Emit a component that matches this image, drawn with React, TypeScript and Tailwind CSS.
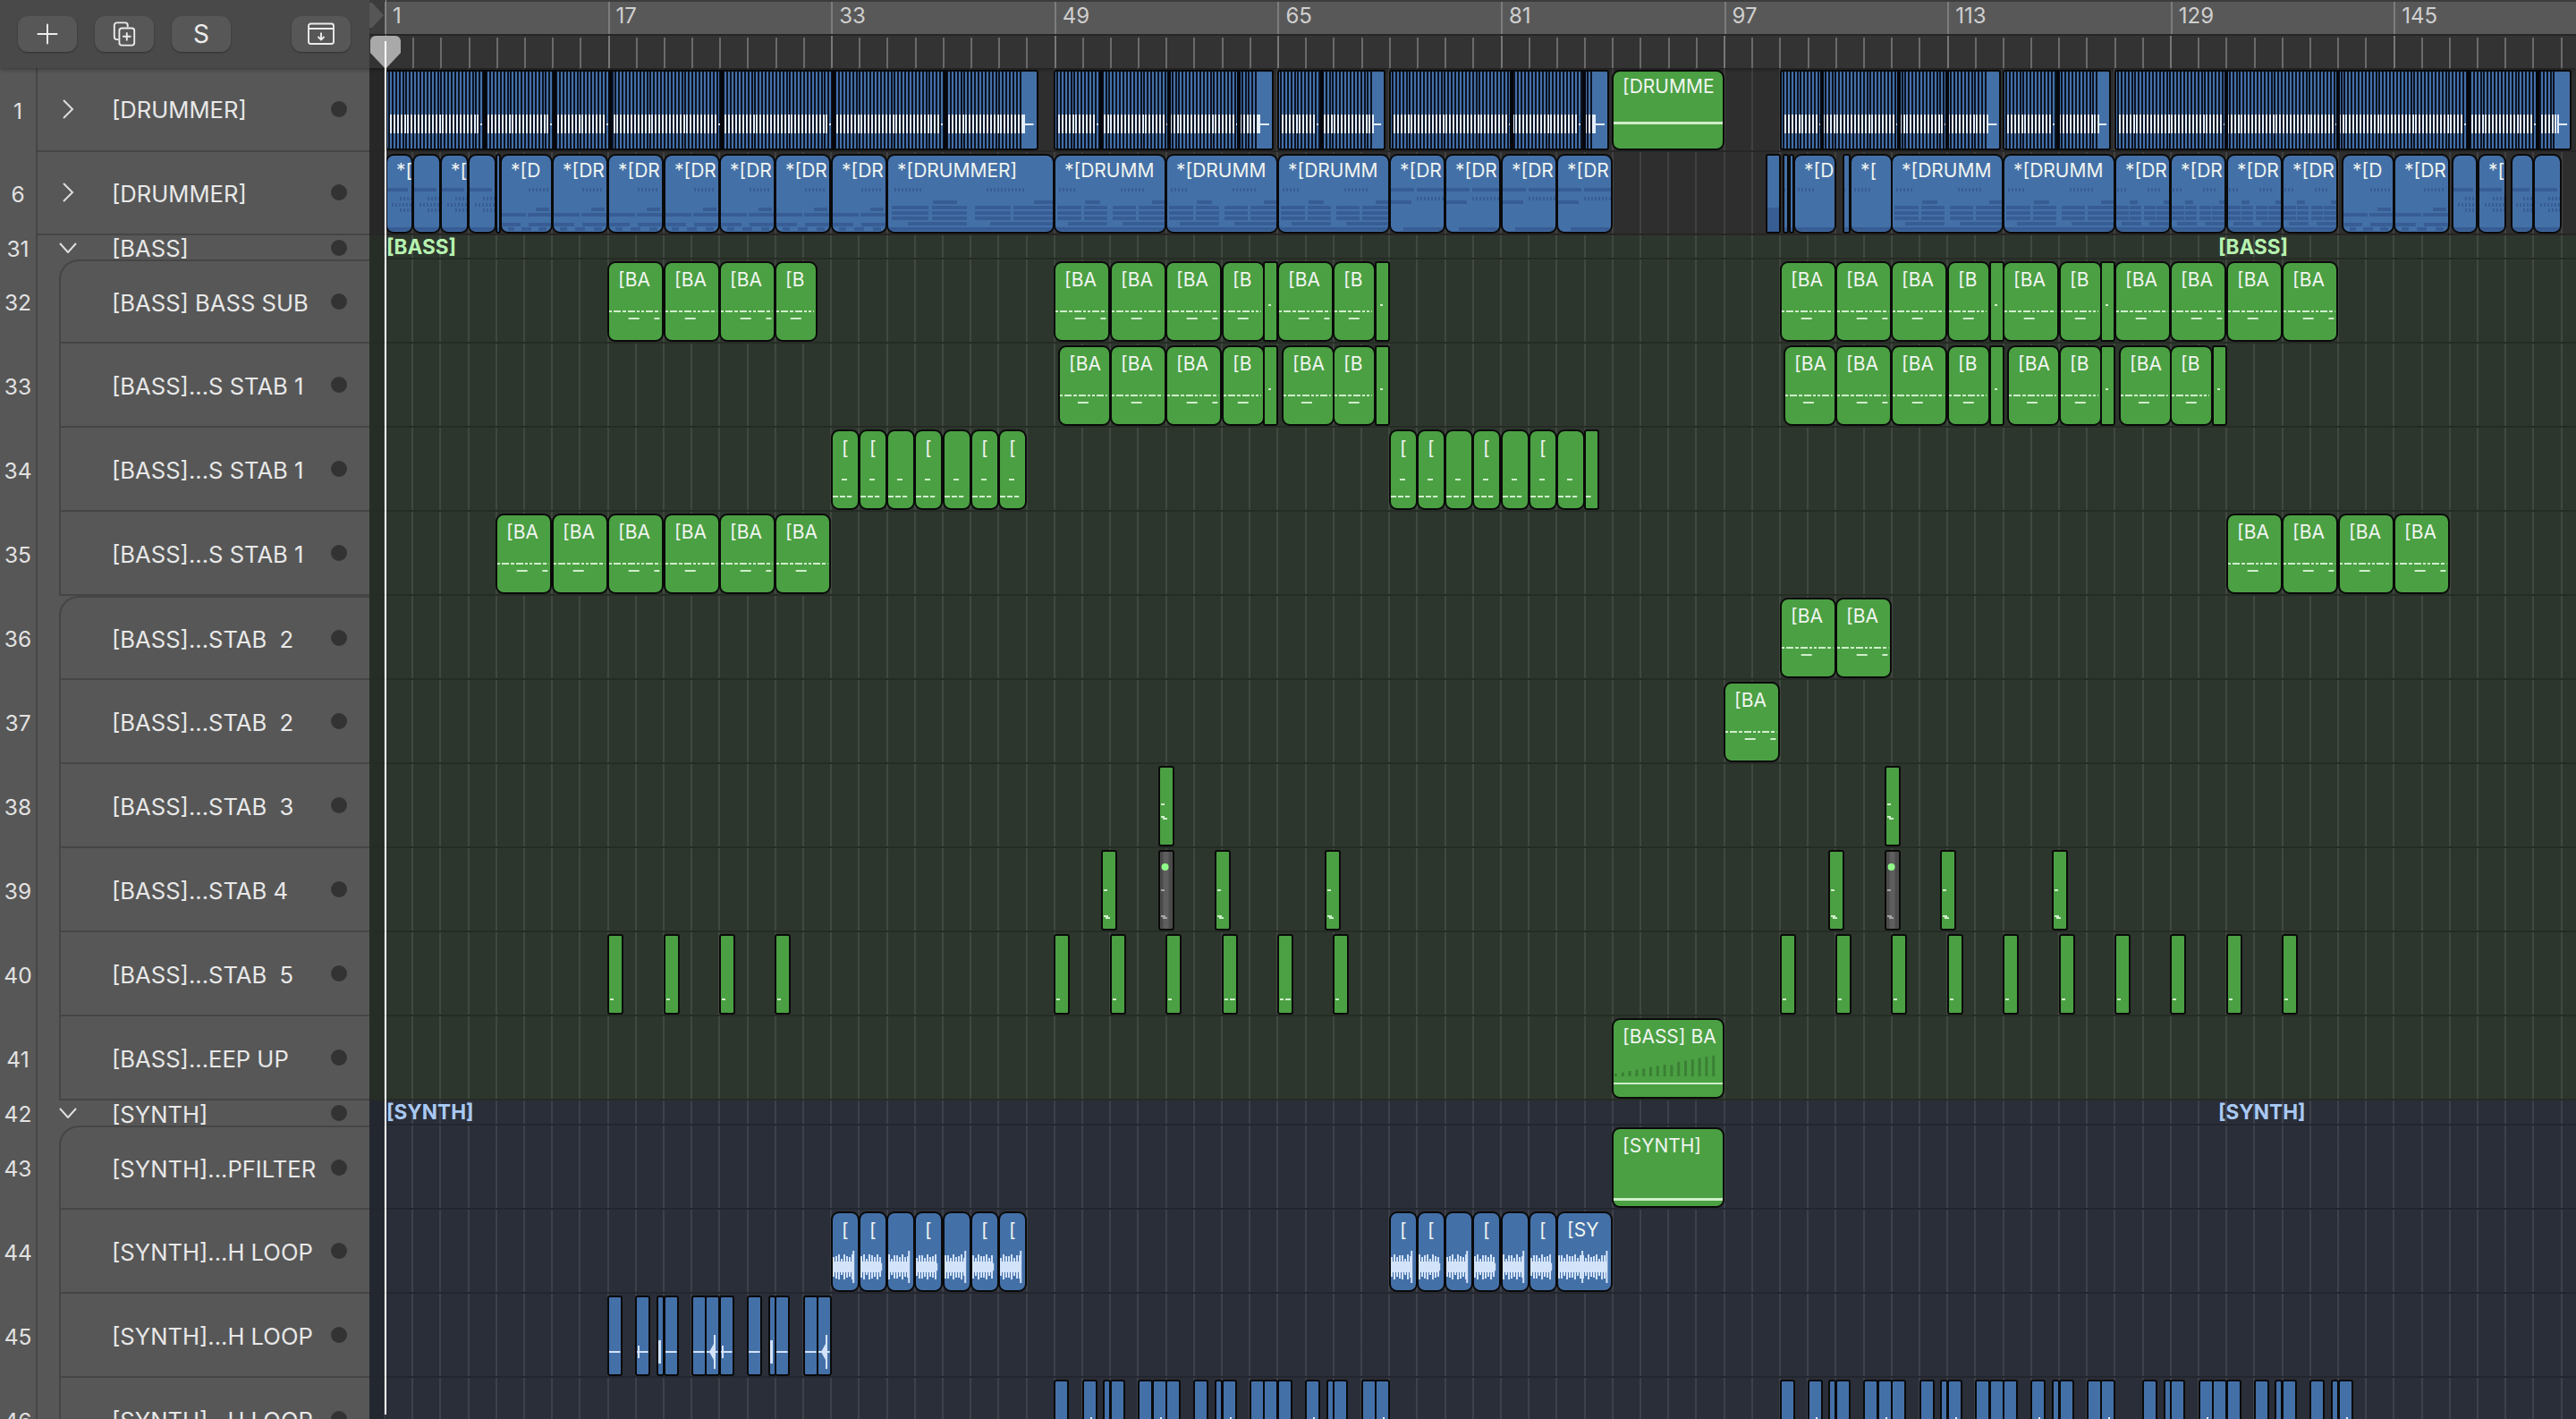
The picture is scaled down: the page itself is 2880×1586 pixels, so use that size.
import React from 'react';
import { Plus } from 'lucide-react';

const BAR = 15.6;
const GRID = 'bg-[repeating-linear-gradient(90deg,transparent_0,transparent_16px,rgba(255,255,255,0.09)_16px,rgba(255,255,255,0.09)_18px,transparent_18px,transparent_31.2px)]';

type Clip = { a: number; b: number; l?: string; art?: string; gray?: boolean; end?: number; div?: number[]; v?: string; wave?: number };
type Row = {
    num: number;
    name: string;
    kind: 'top' | 'group' | 'child';
    round?: boolean;
    tone: 'none' | 'bass' | 'synth';
    color?: 'green' | 'blue';
    art?: string;
    clips?: Clip[];
    tag?: string;
};

const cl = (a: number, b: number, l = ''): Clip => ({ a, b, l });
const from = (list: [number, number, string?][]) => list.map(([a, b, l]) => cl(a, b, l));

const bassA = from([[49, 53, '[BA'], [53, 57, '[BA'], [57, 61, '[BA'], [61, 64, '[B'], [64, 65], [65, 69, '[BA'], [69, 72, '[B'], [72, 73]]);
const bassB = from([[101, 105, '[BA'], [105, 109, '[BA'], [109, 113, '[BA'], [113, 116, '[B'], [116, 117], [117, 121, '[BA'], [121, 124, '[B'], [124, 125], [125, 129, '[BA'], [129, 133, '[BA'], [133, 137, '[BA'], [137, 141, '[BA']]);
const stabShort = (s: number, labels: string[]) => labels.map((l, i) => cl(s + i * 2, s + i * 2 + 2, l));

const drumRow: Clip[] = [
    { a: 1.1, b: 47.8, end: 46.8, div: [8.2, 13.2, 17.2, 25.2, 33.2, 41.2], art: 'stripes' },
    { a: 49, b: 64.7, end: 63.7, div: [52.4, 57.3, 62.3], art: 'stripes' },
    { a: 65, b: 72.7, end: 71.8, div: [68.2], art: 'stripes' },
    { a: 73, b: 88.7, end: 87.7, div: [81.8, 87], art: 'stripes' },
    { a: 89, b: 97, l: '[DRUMME', art: 'green60' },
    { a: 101, b: 116.8, end: 115.8, div: [104, 109.5, 113], art: 'stripes' },
    { a: 117, b: 124.7, end: 123.8, div: [121], art: 'stripes' },
    { a: 125, b: 157.7, end: 156.7, div: [133, 141, 150.4, 155.3], art: 'stripes' },
];

const midi = (a: number, b: number, l: string, v: string): Clip => ({ a, b, l, v, art: 'midi' });
const drumMidi: Clip[] = [
    midi(1.1, 3, '*[', 's'), midi(3, 5, '', 's'), midi(5, 7, '*[', 's'), midi(7, 9, '', 's'), midi(9, 9.3, '', 'x'),
    midi(9.3, 13, '*[D', 'd'), midi(13, 17, '*[DR', 'd'), midi(17, 21, '*[DR', 'd'), midi(21, 25, '*[DR', 'd'),
    midi(25, 29, '*[DR', 'd'), midi(29, 33, '*[DR', 'd'), midi(33, 37, '*[DR', 'd'), midi(37, 49, '*[DRUMMER]', 'm'),
    midi(49, 57, '*[DRUMM', 'm'), midi(57, 65, '*[DRUMM', 'm'), midi(65, 73, '*[DRUMM', 'm'),
    midi(73, 77, '*[DR', 't'), midi(77, 81, '*[DR', 't'), midi(81, 85, '*[DR', 't'), midi(85, 89, '*[DR', 't'),
    midi(100, 101, '', 'p'), midi(101.2, 101.6, '', 'x'), midi(101.7, 102, '', 'x'), midi(102, 105, '*[D', 'x'),
    midi(105.5, 106, '', 'x'), midi(106, 109, '*[', 'x'), midi(109, 117, '*[DRUMM', 'm'), midi(117, 125, '*[DRUMM', 'm'),
    midi(125, 129, '*[DR', 'm'), midi(129, 133, '*[DR', 'm'), midi(133, 137, '*[DR', 'm'), midi(137, 141, '*[DR', 'm'),
    midi(141.3, 145, '*[D', 'd'), midi(145, 149, '*[DR', 'd'), midi(149.2, 151, '', 's'), midi(151, 153, '*[', 's'),
    midi(153.4, 155, '', 's'), midi(155, 157, '', 's'),
];

const seq46 = (s: number, spans: number[][]) => spans.map(([a, b], i) => ({ a: s + a, b: s + b, l: '', art: 'tick', wave: i }));
const p46 = [[0, 1], [2, 3], [3.5, 4], [4, 5], [6, 7], [7, 8], [8, 9], [10, 11], [11.5, 12], [12, 13], [14, 15], [15, 16], [16, 17], [18, 19], [19.5, 20], [20, 21], [22, 23], [23, 24]];
const p46b = [...p46, [26, 27], [27.5, 28], [28, 29], [30, 31], [31, 32], [32, 33], [34, 35], [35.5, 36], [36, 37], [38, 39], [39.5, 40], [40, 41]];

const rows: Row[] = [
    { num: 1, name: '[DRUMMER]', kind: 'top', tone: 'none', color: 'blue', clips: drumRow },
    { num: 6, name: '[DRUMMER]', kind: 'top', tone: 'none', color: 'blue', clips: drumMidi },
    { num: 31, name: '[BASS]', kind: 'group', tone: 'bass', tag: '[BASS]' },
    {
        num: 32, name: '[BASS] BASS SUB', kind: 'child', round: true, tone: 'bass', color: 'green', art: 'bass',
        clips: [...from([[17, 21, '[BA'], [21, 25, '[BA'], [25, 29, '[BA'], [29, 32, '[B']]), ...bassA, ...bassB],
    },
    {
        num: 33, name: '[BASS]...S STAB 1', kind: 'child', tone: 'bass', color: 'green', art: 'bass',
        clips: from([[49.3, 53, '[BA'], [53, 57, '[BA'], [57, 61, '[BA'], [61, 64, '[B'], [64, 65], [65.3, 69, '[BA'], [69, 72, '[B'], [72, 73], [101.3, 105, '[BA'], [105, 109, '[BA'], [109, 113, '[BA'], [113, 116, '[B'], [116, 117], [117.3, 121, '[BA'], [121, 124, '[B'], [124, 125], [125.3, 129, '[BA'], [129, 132, '[B'], [132, 133]]),
    },
    {
        num: 34, name: '[BASS]...S STAB 1', kind: 'child', tone: 'bass', color: 'green', art: 'stab',
        clips: [...stabShort(33, ['[', '[', '', '[', '', '[', '[']), ...stabShort(73, ['[', '[', '', '[', '', '[', '']), cl(87, 88)],
    },
    {
        num: 35, name: '[BASS]...S STAB 1', kind: 'child', tone: 'bass', color: 'green', art: 'bass',
        clips: [9, 13, 17, 21, 25, 29, 133, 137, 141, 145].map(s => cl(s, s + 4, '[BA')),
    },
    { num: 36, name: '[BASS]...STAB  2', kind: 'child', round: true, tone: 'bass', color: 'green', art: 'bass', clips: [cl(101, 105, '[BA'), cl(105, 109, '[BA')] },
    { num: 37, name: '[BASS]...STAB  2', kind: 'child', tone: 'bass', color: 'green', art: 'bass', clips: [cl(97, 101, '[BA')] },
    { num: 38, name: '[BASS]...STAB  3', kind: 'child', tone: 'bass', color: 'green', art: 'row38', clips: [cl(56.5, 57.6), cl(108.5, 109.6)] },
    {
        num: 39, name: '[BASS]...STAB 4', kind: 'child', tone: 'bass', color: 'green', art: 'row39',
        clips: [cl(52.4, 53.5), { a: 56.5, b: 57.6, gray: true }, cl(60.5, 61.6), cl(68.4, 69.5), cl(104.5, 105.6), { a: 108.5, b: 109.6, gray: true }, cl(112.5, 113.6), cl(120.5, 121.6)],
    },
    {
        num: 40, name: '[BASS]...STAB  5', kind: 'child', tone: 'bass', color: 'green', art: 'row40',
        clips: [17, 21, 25, 29, 49, 53, 57, 61, 65, 69, 101, 105, 109, 113, 117, 121, 125, 129, 133, 137].map(s => cl(s, s + 1.08)),
    },
    { num: 41, name: '[BASS]...EEP UP', kind: 'child', tone: 'bass', color: 'green', art: 'sweep', clips: [cl(89, 97, '[BASS] BA')] },
    { num: 42, name: '[SYNTH]', kind: 'group', tone: 'synth', tag: '[SYNTH]' },
    { num: 43, name: '[SYNTH]...PFILTER', kind: 'child', round: true, tone: 'synth', color: 'green', art: 'green81', clips: [cl(89, 97, '[SYNTH]')] },
    {
        num: 44, name: '[SYNTH]...H LOOP', kind: 'child', tone: 'synth', color: 'blue', art: 'wave',
        clips: [...stabShort(33, ['[', '[', '', '[', '', '[', '[']), ...stabShort(73, ['[', '[', '', '[', '', '[']), cl(85, 89, '[SY')],
    },
    {
        num: 45, name: '[SYNTH]...H LOOP', kind: 'child', tone: 'synth', color: 'blue', art: 'thin',
        clips: [[17, 18, 0], [19, 20, 1], [20.5, 21, 2], [21, 22, 0], [23, 24, 0], [24, 25, 3], [25, 26, 1], [27, 28, 0], [28.5, 29, 2], [29, 30, 0], [31, 32, 0], [32, 33, 3]].map(([a, b, wave]) => ({ a, b, wave })),
    },
    {
        num: 46, name: '[SYNTH]...H LOOP', kind: 'child', tone: 'synth', color: 'blue', art: 'tick',
        clips: [...seq46(49, p46), ...seq46(101, p46b)],
    },
];

// stripes sit on whole pixels so the 2px dark / 2px light rhythm stays sharp
const Stripes = ({ clip, w }: { clip: Clip; w: number }) => {
    const endX = Math.round(((clip.end ?? clip.b) - clip.a) * BAR);
    const divs = (clip.div ?? []).map(d => Math.round((d - clip.a) * BAR));
    let dark = '';
    let white = '';
    let dots = '';
    for (let i = 1; i * 3.9 < endX; i++) {
        const x = Math.round(i * 3.9);
        dark += `M${x} 0v94`;
        const mid = x + 2;
        if (divs.some(d => mid > d - 6 && mid < d)) dots += `M${mid} 62v2`;
        else if (!divs.some(d => Math.abs(mid - d) < 2)) white += `M${mid} 52v21`;
    }
    const thick = divs.map(d => `M${d} 0v94`).join('');
    return (
        <>
            <path d={dark} stroke="#0c1322" strokeWidth="2" shapeRendering="crispEdges" />
            <path d={white} stroke="#e2edfc" strokeWidth="2" shapeRendering="crispEdges" />
            <path d={dots} stroke="#e2edfc" strokeWidth="2" shapeRendering="crispEdges" />
            <path d={thick} stroke="#05070c" strokeWidth="4" shapeRendering="crispEdges" />
            <rect x={endX} y="52" width="2" height="21" fill="#e2edfc" />
            <rect x={endX} y="62" width={w - endX - 4} height="2" fill="#e2edfc" />
        </>
    );
};

const midiRects = (w: number, v: string) => {
    const out: number[][] = [];
    const ticks = (y: number, s: number, e: number) => {
        for (let x = s * w; x < e * w; x += 4) out.push([x, y, 2, 4]);
    };
    const blocks = (y: number, list: number[][]) => list.forEach(([s, e]) => out.push([s * w, y, (e - s) * w, 4]));
    if (v === 's') {
        blocks(40, [[0, 0.85]]);
        [50, 57, 63].forEach((y, i) => ticks(y, i === 1 ? 0.25 : 0.55, 0.98));
        blocks(84, [[0, 1]]);
    } else if (v === 'd') {
        ticks(40, 0.55, 0.92);
        blocks(62, [[0.7, 0.95]]);
        blocks(68, [[0.02, 0.5], [0.53, 1]]);
        blocks(79, [[0.03, 0.4], [0.55, 1]]);
        blocks(84, [[0.15, 0.27], [0.42, 0.6], [0.75, 0.9]]);
    } else if (v === 'm') {
        ticks(40, 0.6, 0.82);
        ticks(40, 0.05, 0.2);
        blocks(54, [[0.28, 0.42], [0.88, 1]]);
        blocks(60, [[0.03, 0.25], [0.27, 0.48], [0.53, 0.74], [0.76, 1]]);
        blocks(66, [[0.03, 0.25], [0.27, 0.48], [0.53, 0.74], [0.76, 1]]);
        blocks(72, [[0.03, 0.25], [0.27, 0.48], [0.53, 0.74], [0.76, 1]]);
        blocks(78, [[0.13, 0.48], [0.62, 1]]);
        blocks(84, [[0, 1]]);
    } else if (v === 't') {
        blocks(40, [[0, 0.45], [0.5, 1]]);
        ticks(50, 0.5, 0.95);
        blocks(54, [[0, 0.4]]);
        blocks(84, [[0.25, 0.95]]);
    } else if (v === 'x') {
        ticks(40, 0.1, 0.5);
        blocks(84, [[0, 1]]);
    } else if (v === 'p') {
        out.push([0, 62, w, 28]);
    }
    return out;
};

const ClipArt = ({ art, clip, w }: { art: string; clip: Clip; w: number }) => {
    const note = '#cfeecb';
    const wave = '#d3e3f9';
    if (art === 'stripes') return <Stripes clip={clip} w={w} />;
    if (art === 'midi') {
        return (
            <>
                {midiRects(w, clip.v ?? '').map(([x, y, rw, rh], i) => (
                    <rect key={i} x={x} y={y} width={rw} height={rh} fill="#375d94" shapeRendering="crispEdges" />
                ))}
            </>
        );
    }
    if (art === 'green60' || art === 'green81') {
        return <rect x="0" y={art === 'green60' ? 60 : 81} width={w + 1} height="3" fill={note} />;
    }
    if (art === 'bass') {
        if (w < 20) return <rect x="6" y="50" width="3" height="2" fill={note} />;
        return (
            <>
                <line x1="2" x2={w - 3} y1="58" y2="58" stroke={note} strokeWidth="2" strokeDasharray="3 2 8 2 4 2 8 2 3 2" />
                <rect x={w * 0.38} y="65" width="12" height="2" fill={note} />
                {w > 60 && clip.a % 8 === 1 && <rect x={w - 10} y="65" width="6" height="2" fill={note} />}
            </>
        );
    }
    if (art === 'stab') {
        return (
            <>
                {w > 20 && <rect x="12" y="57" width="6" height="2" fill={note} />}
                <line x1="2" x2={w - 8} y1="77" y2="77" stroke={note} strokeWidth="2" strokeDasharray="6 2" />
            </>
        );
    }
    if (art === 'row38') {
        return (
            <>
                <rect x="3" y="44" width="4" height="2" fill={note} />
                <rect x="3" y="58" width="4" height="2" fill={note} />
                <rect x="5" y="60" width="5" height="2" fill={note} />
            </>
        );
    }
    if (art === 'row39') {
        const c = clip.gray ? '#a5a5a5' : note;
        return (
            <>
                {clip.gray && <rect x={w / 2 - 3} y="0" width="6" height="94" fill="#5e5e5e" />}
                {clip.gray && <ellipse cx={w / 2 - 1} cy="21" rx="4" ry="4" fill="#8ffb87" />}
                <rect x="3" y="46" width="4" height="2" fill={c} />
                <rect x="3" y="75" width="5" height="2" fill={c} />
                <rect x="5" y="77" width="5" height="2" fill={c} />
            </>
        );
    }
    if (art === 'row40') {
        return (
            <>
                <rect x="3" y="74" width="4" height="2" fill={note} />
                {(clip.a === 61 || clip.a === 65) && <rect x="9" y="74" width="6" height="2" fill={note} />}
            </>
        );
    }
    if (art === 'sweep') {
        return (
            <>
                {Array.from({ length: 15 }, (_, i) => {
                    const h = 3 + i * 1.45 + (i === 8 ? -2 : 0);
                    return <rect key={i} x={3 + i * 7.8} y={67 - h} width="3" height={h} fill="#3b8035" />;
                })}
                <rect x="0" y="74" width={w + 1} height="2" fill={note} />
            </>
        );
    }
    if (art === 'wave') {
        let d = '';
        for (let x = 3; x < w - 6; x += 3) {
            const h = 9 + 5 * Math.abs(Math.sin(x * 1.7 + clip.a));
            d += `M${x} ${(64 - h).toFixed(1)}v${(h * 2).toFixed(1)}`;
        }
        return (
            <>
                <path d={d} stroke={wave} strokeWidth="2" shapeRendering="crispEdges" />
                <rect x="0" y="58" width={w - 6} height="12" fill={wave} />
                <rect x={w - 7} y={clip.a % 4 === 1 ? 46 : 60} width="2" height={clip.a % 4 === 1 ? 36 : 8} fill={wave} />
                {w > 60 && <rect x={w * 0.45} y="46" width="2" height="36" fill={wave} />}
            </>
        );
    }
    if (art === 'thin') {
        const t = clip.wave ?? 0;
        return (
            <>
                {t !== 2 && <rect x="1" y="64" width={w - 2} height="2" fill={wave} />}
                {t === 1 && <rect x="3" y="58" width="2" height="14" fill={wave} />}
                {t === 2 && <rect x="2" y="52" width="3" height="26" fill={wave} />}
                {t === 3 && <path d="M5 65 L10 56 L10 46 L12 46 L12 84 L10 84 L10 74 Z" fill={wave} />}
            </>
        );
    }
    if (art === 'tick') {
        return (clip.wave ?? 0) % 4 === 1 ? <rect x="9" y="44" width="2" height="4" fill="#e8f0ff" /> : null;
    }
    return null;
};

const ClipBox = ({ clip, row }: { clip: Clip; row: Row }) => {
    const w = (clip.b - clip.a) * BAR;
    const art = clip.art ?? row.art ?? '';
    const green = clip.art === 'green60' || row.color === 'green';
    const bg = clip.gray ? 'bg-[#4c4c4c]' : green ? 'bg-[#4ba043]' : 'bg-[#4470a8]';
    const small = w < 22 || art === 'stripes';
    const left = Math.round(16.5 + (clip.a - 1) * BAR);
    return (
        <div
            className={`absolute top-[2px] bottom-0 overflow-hidden border-2 border-[#0a0a0a] ${small ? 'rounded-[3px]' : 'rounded-[9px]'} ${bg}`}
            style={{ left, width: Math.round(w) + 1 }}
        >
            <svg className="absolute -left-[2px] -top-[4px]" width={w + 1} height="94">
                <ClipArt art={art} clip={clip} w={w} />
            </svg>
            {clip.l && (
                <div className={`relative whitespace-nowrap pl-[10px] text-[21px] leading-[26px] text-[#f0f5f0] ${row.kind === 'top' ? 'pt-[4px]' : 'pt-[6px]'}`}>{clip.l}</div>
            )}
        </div>
    );
};

const ChevronRight = () => (
    <svg width="14" height="24" viewBox="0 0 14 24" fill="none" stroke="#dedede" strokeWidth="2">
        <path d="M2 2 L12 12 L2 22" />
    </svg>
);

const ChevronDown = () => (
    <svg width="20" height="12" viewBox="0 0 20 12" fill="none" stroke="#dedede" strokeWidth="2">
        <path d="M1 1 L10 11 L19 1" />
    </svg>
);

const RecDot = () => <span className="mr-[25px] h-[18px] w-[18px] shrink-0 rounded-full bg-[#333333]" />;

const TrackHeader = ({ row }: { row: Row }) => {
    const group = row.kind === 'group';
    const name = (
        <span className="flex-1 whitespace-pre pt-[3px] text-[25.6px] leading-[30px] text-[#e8e8e8]">{row.name}</span>
    );
    return (
        <div className="flex h-full w-[413px] shrink-0 bg-[#575757]">
            <div className="flex h-full w-[42px] shrink-0 items-center justify-center border-r-2 border-[#454545] pt-[3px] text-[24.5px] text-[#e2e2e2]">
                {row.num}
            </div>
            {row.kind === 'child' ? (
                <div className="flex flex-1 pl-[24px]">
                    <div className={`flex flex-1 items-center border-b-2 border-l-2 border-[#454545] pl-[57px] ${row.round ? 'rounded-tl-[22px] border-t-2' : ''}`}>
                        {name}
                        <RecDot />
                    </div>
                </div>
            ) : (
                <div className={`flex flex-1 items-center overflow-hidden ${group ? '' : 'border-b-2 border-[#454545]'}`}>
                    <div className="flex w-[83px] shrink-0 items-center justify-center pr-[16px]">
                        {group ? <ChevronDown /> : <ChevronRight />}
                    </div>
                    {name}
                    <RecDot />
                </div>
            )}
        </div>
    );
};

const laneTone = { none: 'bg-[#2e2e2e] border-[#262626]', bass: 'bg-[#2d362d] border-[#252c25]', synth: 'bg-[#2a2e38] border-[#23262e]' };

const TrackRow = ({ row, height }: { row: Row; height: string }) => {
    const tagColor = row.tone === 'bass' ? 'text-[#b7f2b0]' : 'text-[#a9c9f3]';
    return (
        <div className={`flex shrink-0 ${height}`}>
            <TrackHeader row={row} />
            <div className={`relative flex-1 overflow-hidden border-b-2 ${laneTone[row.tone]} ${GRID}`}>
                <div className="absolute inset-y-0 left-0 w-[18px] bg-black/15" />
                {row.clips?.map((c, i) => (
                    <ClipBox key={i} clip={c} row={row} />
                ))}
                {row.tag && (
                    <>
                        <span className={`absolute left-[19px] top-0 text-[22.6px] font-bold leading-[26px] ${tagColor}`}>{row.tag}</span>
                        <span className={`absolute left-[2067px] top-0 text-[22.6px] font-bold leading-[26px] ${tagColor}`}>{row.tag}</span>
                    </>
                )}
            </div>
        </div>
    );
};

const IconButton = ({ children, className = '' }: { children: React.ReactNode; className?: string }) => (
    <button className={`flex h-[40px] w-[66px] items-center justify-center rounded-[11px] bg-[#575757] text-[#ececec] shadow-[0_1px_2px_rgba(0,0,0,0.35)] ${className}`}>
        {children}
    </button>
);

const Toolbar = () => (
    <div className="flex h-[76px] w-[413px] shrink-0 items-start bg-[#494949] pl-[20px] pt-[18px]">
        <IconButton>
            <Plus size={36} strokeWidth={1.3} />
        </IconButton>
        <IconButton className="ml-[20px]">
            <svg width="28" height="28" viewBox="0 0 28 30" fill="none" stroke="currentColor" strokeWidth="2">
                <path d="M7 21.5 H5 a3 3 0 0 1 -3 -3 V4.5 a3 3 0 0 1 3 -3 h10 a3 3 0 0 1 3 3 V7" />
                <rect x="8" y="8" width="18" height="20.5" rx="3" />
                <path d="M17 13 v10 M12 18 h10" />
            </svg>
        </IconButton>
        <IconButton className="ml-[20px]">
            <span className="text-[28px] leading-none">S</span>
        </IconButton>
        <IconButton className="ml-[68px]">
            <svg width="32" height="26" viewBox="0 0 32 26" fill="none" stroke="currentColor" strokeWidth="1.9">
                <rect x="2" y="1.5" width="28" height="22.5" rx="2.5" />
                <path d="M2 7 h28 M16 11.5 v8 M12.5 16 l3.5 3.5 l3.5 -3.5" />
            </svg>
        </IconButton>
    </div>
);

const Ruler = () => (
    <div className="flex flex-1 flex-col overflow-hidden bg-[#333333]">
        <div className="flex h-[38px] shrink-0 bg-[#3c3c3c] pt-[2px]">
            <div className="flex w-[17px] shrink-0 items-start">
                <svg width="17" height="30" viewBox="0 0 17 30">
                    <path d="M0 1 L3 1 L16 15 L3 29 L0 29 Z" fill="#565656" />
                </svg>
            </div>
            <div className="flex flex-1 bg-[#585858]">
                {[1, 17, 33, 49, 65, 81, 97, 113, 129, 145].map(n => (
                    <div key={n} className="h-full w-[249.6px] shrink-0 border-l-2 border-[#7c7c7c] pl-[7px] text-[24px] leading-[32px] text-[#cfcfcf]">
                        {n}
                    </div>
                ))}
            </div>
        </div>
        <div className="h-[2px] shrink-0 bg-[#262626]" />
        <div className="flex h-[36px] items-end pl-[17px]">
            {Array.from({ length: 80 }, (_, i) => (
                <div key={i} className={`w-[31.2px] shrink-0 border-l-2 ${i % 8 === 0 ? 'h-[36px] border-[#777777]' : 'h-[34px] border-[#6a6a6a]'}`} />
            ))}
        </div>
    </div>
);

const Playhead = () => (
    <>
        <div className="absolute left-[431px] top-0 h-[40px] border-l border-dotted border-[#9a9a9a]" />
        <svg className="absolute left-[414px] top-[40px]" width="34" height="36" viewBox="0 0 34 36">
            <path d="M6 0 H28 a6 6 0 0 1 6 6 V19 L18 36 H16 L0 19 V6 a6 6 0 0 1 6 -6 Z" fill="#a9a9a9" />
        </svg>
        <div className="absolute left-[430px] top-[46px] h-[1535px] w-[2px] bg-white" />
    </>
);

const heightFor = (r: Row) => {
    if (r.num === 1 || r.num === 6) return 'h-[93.5px]';
    if (r.num === 31) return 'h-[27px]';
    if (r.num === 42) return 'h-[28px]';
    return 'h-[94px]';
};

const App: React.FC = () => {
    return (
        <div className="relative flex h-[1586px] w-[2880px] flex-col overflow-hidden bg-[#2e2e2e] font-['Inter','Liberation_Sans',sans-serif]">
            <div className="relative z-10 flex h-[76px] shrink-0 shadow-[0_2px_4px_rgba(0,0,0,0.3)]">
                <Toolbar />
                <Ruler />
            </div>
            {rows.map(r => (
                <TrackRow key={r.num} row={r} height={heightFor(r)} />
            ))}
            <div className="absolute inset-0 z-20 pointer-events-none">
                <Playhead />
            </div>
        </div>
    );
};

export default App;
